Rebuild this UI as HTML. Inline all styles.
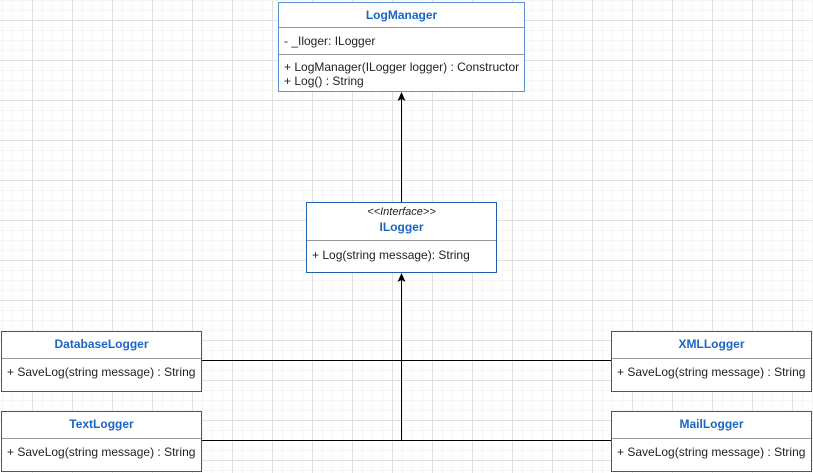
<!DOCTYPE html>
<html><head><style>
html,body{margin:0;padding:0}
body{width:813px;height:473px;position:relative;overflow:hidden;font-family:"Liberation Sans",Arial,sans-serif;font-size:12px;color:#222;
background-color:#fff;
background-image:
linear-gradient(to right,#e0e0e0 1px,transparent 1px),
linear-gradient(to bottom,#e0e0e0 1px,transparent 1px),
linear-gradient(to right,#f5f5f5 1px,transparent 1px),
linear-gradient(to bottom,#f5f5f5 1px,transparent 1px);
background-size:40px 40px,40px 40px,10px 10px,10px 10px;
background-position:32px 20px,32px 20px,2px 0px,2px 0px;}
.box{position:absolute;background:#fff;border:1px solid #1f5fae;box-sizing:border-box}
.t{font-weight:bold;color:#1a66c4;text-align:center;font-size:12px}
.d{position:absolute;left:0;right:0;border-top:1px solid #999}
.m{position:absolute;left:5px;white-space:nowrap;line-height:14px}
svg{position:absolute;left:0;top:0}
</style></head><body>
<svg width="813" height="473">
<line x1="401.5" y1="94" x2="401.5" y2="202" stroke="#000" stroke-width="1"/>
<polygon points="401.5,92 397.5,101 401.5,99 405.5,101" fill="#000"/>
<line x1="401.5" y1="275" x2="401.5" y2="441" stroke="#000" stroke-width="1"/>
<polygon points="401.5,273 397.5,282 401.5,280 405.5,282" fill="#000"/>
<line x1="201" y1="360.5" x2="611" y2="360.5" stroke="#000"/>
<line x1="201" y1="440.5" x2="611" y2="440.5" stroke="#000"/>
</svg>

<div class="box" style="left:278px;top:2px;width:247px;height:90px;border-color:#5a93d6">
<div class="t" style="position:absolute;left:0;right:0;top:5px">LogManager</div>
<div class="d" style="top:24px"></div>
<div class="m" style="top:31px">- _Iloger: ILogger</div>
<div class="d" style="top:51px"></div>
<div class="m" style="top:57px">+ LogManager(ILogger logger) : Constructor</div>
<div class="m" style="top:71px">+ Log() : String</div>
</div>

<div class="box" style="left:306px;top:202px;width:191px;height:71px">
<div style="position:absolute;left:0;right:0;top:3px;text-align:center;font-style:italic;font-size:11px">&lt;&lt;Interface&gt;&gt;</div>
<div class="t" style="position:absolute;left:0;right:0;top:17px">ILogger</div>
<div class="d" style="top:37px"></div>
<div class="m" style="top:45px">+ Log(string message): String</div>
</div>

<div class="box" style="left:1px;top:331px;width:201px;height:61px">
<div class="t" style="position:absolute;left:0;right:0;top:5px">DatabaseLogger</div>
<div class="d" style="top:26px"></div>
<div class="m" style="top:33px">+ SaveLog(string message) : String</div>
</div>
<div class="box" style="left:1px;top:411px;width:201px;height:61px">
<div class="t" style="position:absolute;left:0;right:0;top:5px">TextLogger</div>
<div class="d" style="top:26px"></div>
<div class="m" style="top:33px">+ SaveLog(string message) : String</div>
</div>
<div class="box" style="left:611px;top:331px;width:201px;height:61px">
<div class="t" style="position:absolute;left:0;right:0;top:5px">XMLLogger</div>
<div class="d" style="top:26px"></div>
<div class="m" style="top:33px">+ SaveLog(string message) : String</div>
</div>
<div class="box" style="left:611px;top:411px;width:201px;height:61px">
<div class="t" style="position:absolute;left:0;right:0;top:5px">MailLogger</div>
<div class="d" style="top:26px"></div>
<div class="m" style="top:33px">+ SaveLog(string message) : String</div>
</div>
</body></html>
